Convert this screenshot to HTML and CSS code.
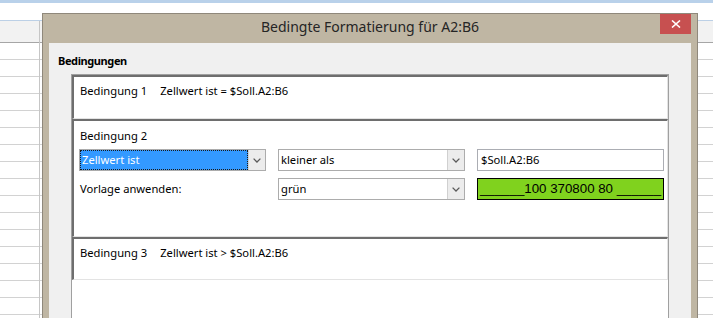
FILE: index.html
```html
<!DOCTYPE html>
<html lang="de">
<head>
<meta charset="utf-8">
<title>Bedingte Formatierung</title>
<link rel="stylesheet" href="styles.css">
</head>
<body>
<div class="sheet">
  <div class="strip"></div>
  <div class="toolbar"></div>
  <div class="grid">
    <div class="col col-head">
      <div class="hdr"></div>
      <div class="row"></div><div class="row"></div><div class="row"></div><div class="row"></div>
      <div class="row"></div><div class="row"></div><div class="row"></div><div class="row"></div>
      <div class="row"></div><div class="row"></div><div class="row"></div><div class="row"></div>
      <div class="row"></div><div class="row"></div><div class="row"></div><div class="row"></div>
      <div class="row"></div>
    </div>
    <div class="col col-cells">
      <div class="hdr"></div>
      <div class="row"></div><div class="row"></div><div class="row"></div><div class="row"></div>
      <div class="row"></div><div class="row"></div><div class="row"></div><div class="row"></div>
      <div class="row"></div><div class="row"></div><div class="row"></div><div class="row"></div>
      <div class="row"></div><div class="row"></div><div class="row"></div><div class="row"></div>
      <div class="row"></div>
    </div>
  </div>
</div>

<div class="dialog">
  <div class="titlebar">
    <span class="spacer"></span>
    <div class="title">Bedingte Formatierung für A2:B6</div>
    <div class="close" aria-label="Schließen">
      <svg width="10" height="8" viewBox="0 0 10 8"><path d="M1 0.5 L9 7.5 M9 0.5 L1 7.5" stroke="#fff" stroke-width="1.6" fill="none"/></svg>
    </div>
  </div>
  <div class="panel">
    <div class="group-label">Bedingungen</div>
    <div class="list">
      <div class="entry entry-collapsed">
        <span>Bedingung 1</span><span>Zellwert ist = $Soll.A2:B6</span>
      </div>
      <div class="entry entry-open">
        <div class="entry-title">Bedingung 2</div>
        <div class="fields">
          <div class="combo combo-focused">
            <span class="combo-text">Zellwert ist</span>
            <span class="combo-btn"><svg width="8" height="5" viewBox="0 0 8 5"><path d="M0.6 0.6 L4 4 L7.4 0.6" stroke="#5a5a5a" stroke-width="1.3" fill="none"/></svg></span>
          </div>
          <div class="combo">
            <span class="combo-text">kleiner als</span>
            <span class="combo-btn"><svg width="8" height="5" viewBox="0 0 8 5"><path d="M0.6 0.6 L4 4 L7.4 0.6" stroke="#5a5a5a" stroke-width="1.3" fill="none"/></svg></span>
          </div>
          <div class="textfield">$Soll.A2:B6</div>
          <div class="field-label">Vorlage anwenden:</div>
          <div class="combo">
            <span class="combo-text">grün</span>
            <span class="combo-btn"><svg width="8" height="5" viewBox="0 0 8 5"><path d="M0.6 0.6 L4 4 L7.4 0.6" stroke="#5a5a5a" stroke-width="1.3" fill="none"/></svg></span>
          </div>
          <div class="preview"><span>______100 370800 80 ______</span></div>
        </div>
      </div>
      <div class="entry entry-collapsed entry-last">
        <span>Bedingung 3</span><span>Zellwert ist &gt; $Soll.A2:B6</span>
      </div>
    </div>
  </div>
</div>
</body>
</html>
```

FILE: styles.css
```css
html, body {
  margin: 0;
  padding: 0;
  width: 713px;
  height: 318px;
  overflow: hidden;
  background: #ffffff;
}

body {
  position: relative;
  font-family: "Noto Sans", "Open Sans", sans-serif;
  font-size: 11.2px;
  color: #000;
}

/* ---------- spreadsheet background ---------- */
.strip {
  height: 3px;
  background: #b9d1ea;
}

.toolbar {
  height: 17px;
  border-bottom: 1px solid #bcd0e6;
}

.grid {
  display: flex;
}

.col-head {
  width: 39px;
  border-right: 1px solid #c6c6c6;
}

.col-cells {
  flex: 1;
}

.hdr {
  height: 21px;
  background: #f2f2f2;
  border-bottom: 1px solid #a6a6a6;
}

.row {
  height: 16px;
  border-bottom: 1px solid #d2d2d2;
}

/* ---------- dialog window ---------- */
.dialog {
  position: absolute;
  left: 42px;
  top: 13px;
  width: 656px;
  height: 320px;
  box-sizing: border-box;
  border: 1px solid #8f887b;
  background: #bfb6a3;
  padding: 0 6px;
  display: flex;
  flex-direction: column;
}

.titlebar {
  height: 29px;
  flex: none;
  display: grid;
  grid-template-columns: 1fr auto 1fr;
  align-items: start;
}

.title {
  font-size: 14px;
  line-height: 25px;
  color: #252525;
  white-space: nowrap;
}

.close {
  justify-self: end;
  width: 31px;
  height: 20px;
  background: #c75050;
  display: flex;
  align-items: center;
  justify-content: center;
}

.panel {
  flex: 1;
  background: #f0f0f0;
  padding: 10px 0 0 9px;
  display: flex;
  flex-direction: column;
}

.group-label {
  font-weight: bold;
  font-size: 11px;
  letter-spacing: -0.4px;
  line-height: 16px;
  margin-bottom: 5px;
}

.list {
  margin-left: 13px;
  width: 598px;
  box-sizing: border-box;
  flex: 1;
  background: #fff;
  border: 1px solid #a0a0a0;
}

.entry {
  border-top: 2px solid #6e6e6e;
  border-left: 2px solid #6e6e6e;
  border-right: 1px solid #e3e3e3;
  border-bottom: 1px solid #e3e3e3;
  padding-left: 5px;
  background: #fff;
}

.entry-collapsed {
  height: 41px;
  box-sizing: content-box;
  display: flex;
  gap: 12px;
  line-height: 16px;
}

.entry-collapsed span {
  margin-top: 6px;
  padding-left: 1px;
}

.entry-last {
  height: 40px;
}

.entry-open {
  height: 108px;
  padding-top: 7px;
}

.entry-title {
  line-height: 16px;
  padding-left: 1px;
}

.fields {
  margin-top: 5px;
  display: grid;
  grid-template-columns: 187px 187px 187px;
  grid-template-rows: 22px 22px;
  column-gap: 12px;
  row-gap: 7px;
}

.combo {
  box-sizing: border-box;
  height: 22px;
  border: 1px solid #acacac;
  background: #fff;
  display: flex;
}

.combo-text {
  flex: 1;
  padding-left: 2px;
  line-height: 20px;
  white-space: nowrap;
}

.combo-focused .combo-text {
  background: #3399ff;
  color: #fff;
  outline: 1px dotted #1a1a1a;
  outline-offset: -1px;
}

.combo-btn {
  width: 16px;
  background: #ececec;
  border-left: 1px solid #d0d0d0;
  display: flex;
  align-items: center;
  justify-content: center;
}

.textfield {
  box-sizing: border-box;
  height: 22px;
  border: 1px solid #abadb3;
  background: #fff;
  padding-left: 3px;
  line-height: 20px;
}

.field-label {
  line-height: 22px;
  padding-left: 1px;
}

.preview {
  box-sizing: border-box;
  height: 22px;
  border: 1px solid #000;
  background: #80d21e;
  display: flex;
  justify-content: center;
  font-family: "Liberation Sans", Arial, sans-serif;
  font-size: 13.3px;
  line-height: 20px;
  white-space: nowrap;
}
```
